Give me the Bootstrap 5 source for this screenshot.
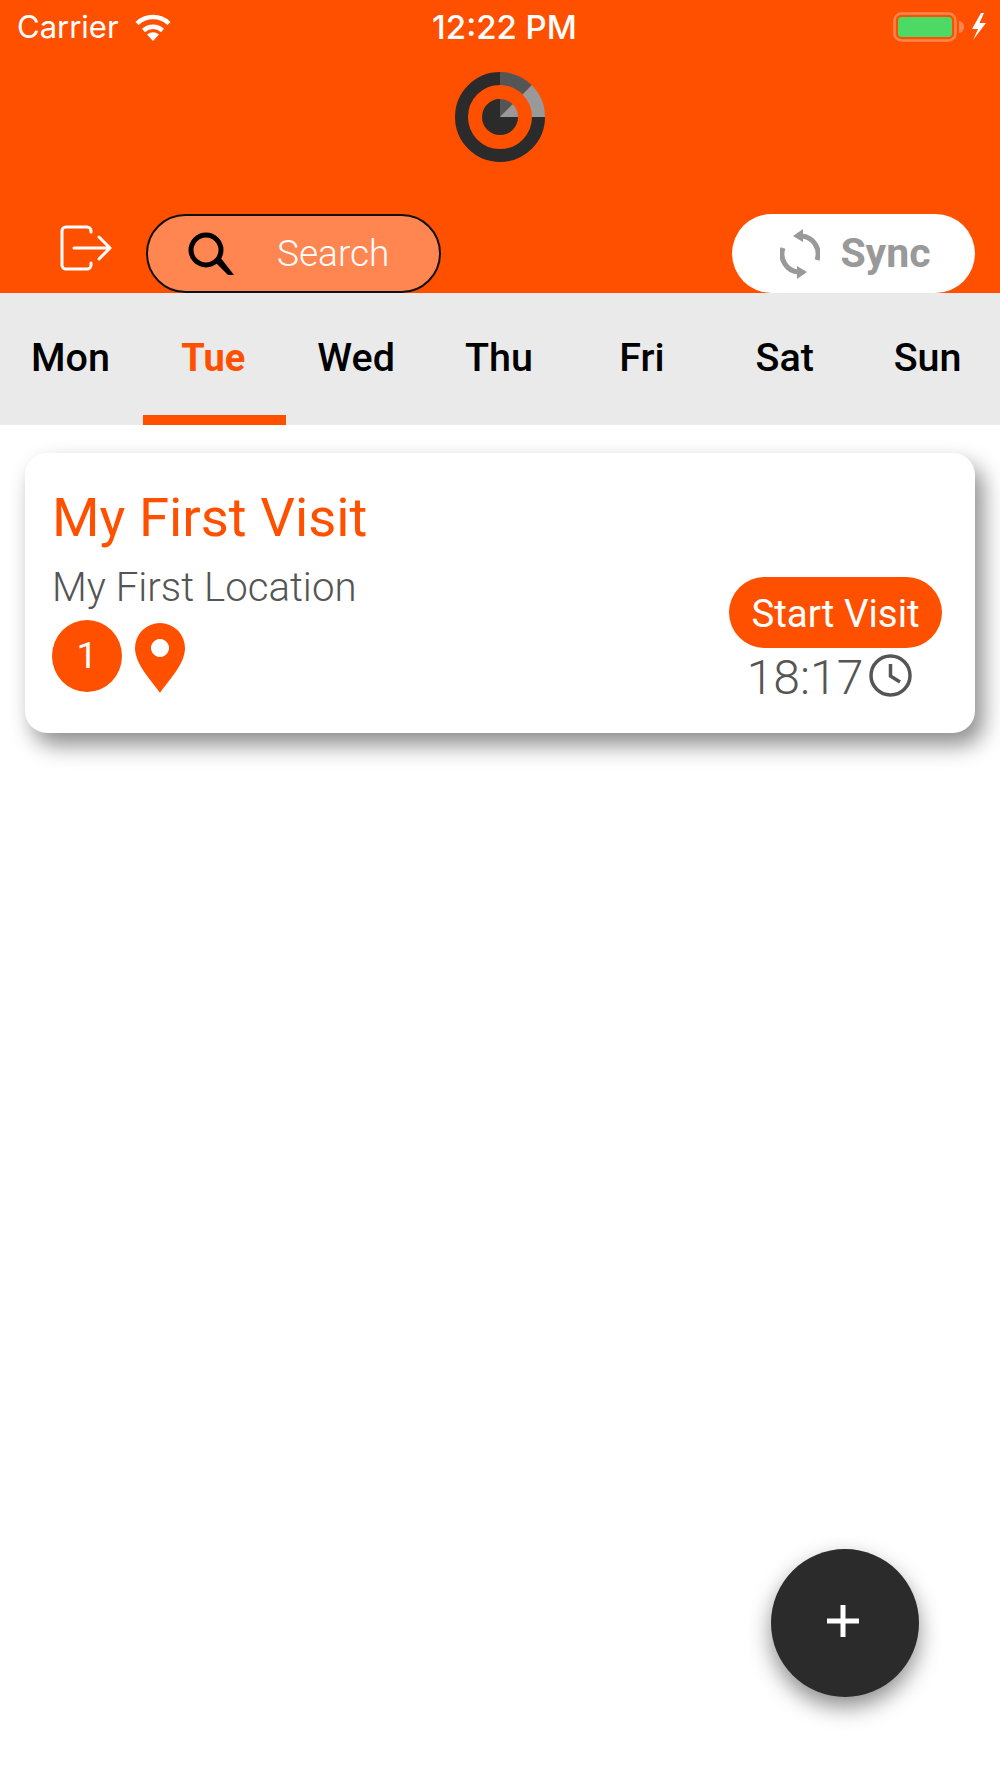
<!DOCTYPE html>
<html lang="en">
<head>
    <meta charset="UTF-8">
    <meta name="viewport" content="width=device-width, initial-scale=1.0">
    <title>Visits</title>
    <link href="https://cdn.jsdelivr.net/npm/bootstrap@5.3.0/dist/css/bootstrap.min.css" rel="stylesheet">
    <style>
        html, body { height: 100%; }
        body { font-family: Roboto, sans-serif; background: #fff; position: relative; overflow: hidden; }
        .app-header { background: #ff5000; height: 293px; overflow: hidden; }
        .status-bar { height: 54px; padding: 0 13px 0 17px; color: #fff; font-family: Inter, sans-serif; font-size: 31px; }
        .status-side { flex: 1 1 0; }
        .status-time { font-size: 33px; font-weight: 500; padding: 2px 0 0 5px; }
        .wifi-icon { margin-left: 15px; }
        .logo-row { margin-top: 18px; }
        .tool-row { margin-top: 52px; padding: 0 25px 0 60px; height: 79px; }
        .exit-icon { margin-top: 10px; }
        .search-pill { width: 295px; height: 79px; margin-left: 34px; background: #ff8650; border: 2.5px solid #111; border-radius: 40px; padding-left: 40px; color: #fff; font-size: 37px; font-weight: 300; }
        .search-pill span { margin-left: 43px; }
        .sync-pill { width: 243px; height: 79px; background: #fff; border-radius: 40px; color: #999; font-size: 41px; font-weight: 700; gap: 20px; padding-left: 4px; }
        .day-tabs { background: #eaeaea; height: 132px; }
        .day-tabs .nav-link { height: 132px; padding: 41px 2px 0 0; color: #000; font-size: 39.500px; font-weight: 500; line-height: 48px; border-bottom: 10px solid transparent; }
        .day-tabs .nav-link.active { color: #ff5000; font-size: 38px; font-weight: 700; border-bottom-color: #ff5000; }
        .visit-card { margin: 28px 25px 0; height: 280px; border: 0; border-radius: 22px; box-shadow: 8px 12px 22px rgba(0, 0, 0, .45); padding: 34px 33px 36px 27px; }
        .visit-title { color: #ff5000; font-size: 54.500px; line-height: 60px; font-weight: 400; margin: 0; }
        .visit-place { color: #555; font-size: 40.200px; line-height: 48px; font-weight: 300; margin-top: 17px; }
        .count-badge { width: 70px; height: 72px; background: #ff5000; color: #fff; border-radius: 50%; font-size: 37px; font-weight: 400; }
        .pin-row { margin-top: 7px; gap: 13px; }
        .pin-icon { margin-top: 4px; }
        .visit-side { width: 213px; }
        .btn-visit { --bs-btn-bg: #ff5000; --bs-btn-color: #fff; --bs-btn-hover-bg: #e54800; --bs-btn-hover-color: #fff; width: 213px; height: 71px; padding: 2px 0 0; border: 0; border-radius: 36px; font-size: 38.500px; line-height: 69px; }
        .visit-time { color: #555; font-size: 48px; font-weight: 300; height: 43px; line-height: 43px; margin-top: 6px; padding-right: 12px; gap: 6px; }
        .visit-time span { padding-top: 4px; }
        .fab { position: absolute; right: 81px; bottom: 81px; width: 148px; height: 148px; border-radius: 50%; background: #2b2b2b; border: 0; padding: 0 4px 4px 0; box-shadow: 0 10px 22px rgba(0, 0, 0, .45); }
    </style>
</head>
<body>
    <!-- header -->
    <header class="app-header">
        <div class="status-bar d-flex align-items-center">
            <div class="status-side d-flex align-items-center">
                <span>Carrier</span>
                <svg class="wifi-icon" width="38" height="28" viewBox="0 0 38 28">
                    <path d="M19 28 L13 21.5 A9 9 0 0 1 25 21.5 Z" fill="#fff"/>
                    <path d="M9.5 17.5 A14 14 0 0 1 28.5 17.5" fill="none" stroke="#fff" stroke-width="4.5"/>
                    <path d="M3 10.5 A23 23 0 0 1 35 10.5" fill="none" stroke="#fff" stroke-width="4.5"/>
                </svg>
            </div>
            <span class="status-time">12:22 PM</span>
            <div class="status-side d-flex align-items-center justify-content-end">
                <svg width="94" height="30" viewBox="0 0 94 30">
                    <rect x="1.5" y="1.5" width="61" height="27" rx="7" fill="none" stroke="#ff8650" stroke-width="2.5"/>
                    <rect x="5" y="5" width="54" height="20" rx="3.5" fill="#4cd964"/>
                    <path d="M66 9 a5 6 0 0 1 0 12 Z" fill="#ff8650"/>
                    <path d="M88 1 L79 17 H85 L80 28 L93 11 H86.500 L91 1 Z" fill="#fff"/>
                </svg>
            </div>
        </div>
        <div class="logo-row d-flex justify-content-center">
            <svg width="90" height="90" viewBox="0 0 90 90">
                <g fill="none" stroke-width="13">
                    <path d="M83.500 45 A38.500 38.500 0 1 1 45 6.500" stroke="#2b2b2b"/>
                    <path d="M45 6.500 A38.500 38.500 0 0 1 72.200 17.800" stroke="#555"/>
                    <path d="M72.200 17.800 A38.500 38.500 0 0 1 83.500 45" stroke="#999"/>
                </g>
                <path d="M63 45 A18 18 0 1 1 45 27 V45 Z" fill="#2b2b2b"/>
                <path d="M45 27 A18 18 0 0 1 57.700 32.300 L45 45 Z" fill="#555"/>
                <path d="M57.700 32.300 A18 18 0 0 1 63 45 H45 Z" fill="#999"/>
            </svg>
        </div>
        <div class="tool-row d-flex align-items-start">
            <svg class="exit-icon" width="52" height="48" viewBox="0 0 52 48" fill="none" stroke="#fff" stroke-width="3" stroke-linecap="round" stroke-linejoin="round">
                <path d="M31 8 V7 a4 4 0 0 0 -4 -4 H6 a4 4 0 0 0 -4 4 V41 a4 4 0 0 0 4 4 H27 a4 4 0 0 0 4 -4 V39"/>
                <path d="M14 24 H50 M39 13 L50 24 L39 35"/>
            </svg>
            <div class="search-pill d-flex align-items-center">
                <svg width="46" height="44" viewBox="0 0 46 44">
                    <circle cx="18" cy="18" r="15" fill="none" stroke="#000" stroke-width="5"/>
                    <path d="M27 30 L32 25 L46 43 H40 Z" fill="#000"/>
                </svg>
                <span>Search</span>
            </div>
            <div class="sync-pill d-flex align-items-center justify-content-center ms-auto">
                <svg width="40" height="54" viewBox="0 0 40 54">
                    <g fill="none" stroke="#999" stroke-width="5">
                        <path d="M22 9 A18 18 0 0 1 37 33"/>
                        <path d="M18 45 A18 18 0 0 1 3 21"/>
                    </g>
                    <path d="M13 9 L23 2 V15 Z M27 45 L17 52 V39 Z" fill="#999"/>
                </svg>
                <span>Sync</span>
            </div>
        </div>
    </header>

    <!-- day tabs -->
    <nav class="nav nav-justified day-tabs">
        <a class="nav-link" href="#">Mon</a>
        <a class="nav-link active" href="#">Tue</a>
        <a class="nav-link" href="#">Wed</a>
        <a class="nav-link" href="#">Thu</a>
        <a class="nav-link" href="#">Fri</a>
        <a class="nav-link" href="#">Sat</a>
        <a class="nav-link" href="#">Sun</a>
    </nav>

    <!-- visit -->
    <div class="card visit-card d-flex flex-row justify-content-between">
        <div>
            <h2 class="visit-title">My First Visit</h2>
            <div class="visit-place">My First Location</div>
            <div class="pin-row d-flex align-items-center">
                <span class="count-badge d-flex align-items-center justify-content-center">1</span>
                <svg class="pin-icon" width="50" height="70" viewBox="0 0 50 70">
                    <path fill-rule="evenodd" d="M25 70 C18 59 0 42 0 25 A25 25 0 0 1 50 25 C50 42 32 59 25 70 Z M25 16 a9 9 0 1 0 0.010 0 Z" fill="#ff5000"/>
                </svg>
            </div>
        </div>
        <div class="visit-side align-self-end">
            <button class="btn btn-visit" type="button">Start Visit</button>
            <div class="visit-time d-flex align-items-center justify-content-center">
                <span>18:17</span>
                <svg width="43" height="43" viewBox="0 0 43 43" fill="none" stroke="#555" stroke-width="3.500">
                    <circle cx="21.500" cy="21.500" r="19.500"/>
                    <path d="M21.500 10 V22 L31 28"/>
                </svg>
            </div>
        </div>
    </div>

    <button class="fab d-flex align-items-center justify-content-center" type="button" aria-label="Add">
        <svg width="32" height="32" viewBox="0 0 32 32"><path d="M13.500 0 H18.500 V13.500 H32 V18.500 H18.500 V32 H13.500 V18.500 H0 V13.500 H13.500 Z" fill="#fff"/></svg>
    </button>

    <script src="https://cdn.jsdelivr.net/npm/bootstrap@5.3.0/dist/js/bootstrap.bundle.min.js"></script>
</body>
</html>
